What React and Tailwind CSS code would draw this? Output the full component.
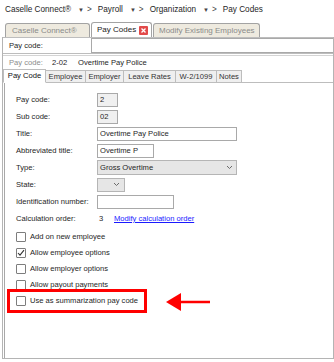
import React from 'react'

const Chevron = ({ className = '' }) => (
  <svg width="7" height="5" viewBox="0 0 7 5" className={className}>
    <path d="M1 1 L3.5 3.5 L6 1" fill="none" stroke="#6b6b6b" strokeWidth="1" />
  </svg>
)

const Crumb = ({ text, caret = true }) => (
  <>
    <span>{text}</span>
    {caret && (
      <>
        <span className="ml-[7px] text-[6px] text-[#444]">▼</span>
        <span className="ml-[3px] mr-[6px] text-[#444]">&gt;</span>
      </>
    )}
  </>
)

const Field = ({ label, children }) => (
  <div className="flex h-[17px] items-center">
    <div className="w-[81px] shrink-0">{label}</div>
    {children}
  </div>
)

const Check = ({ label, checked = false }) => (
  <div className="flex h-[16px] items-center">
    <div className="flex h-[10px] w-[10px] items-center justify-center rounded-[1px] border border-[#7d7d7d] bg-white">
      {checked && (
        <svg width="8" height="8" viewBox="0 0 8 8">
          <path d="M1 4 L3 6.2 L7 1.2" fill="none" stroke="#333" strokeWidth="1.1" />
        </svg>
      )}
    </div>
    <span className="ml-[4px]">{label}</span>
  </div>
)

const innerTabs = [
  ['Pay Code', 'w-[43px]', true],
  ['Employee', 'w-[40px]'],
  ['Employer', 'w-[38px]'],
  ['Leave Rates', 'w-[52px]'],
  ['W-2/1099', 'w-[41px]'],
  ['Notes', 'w-[25px]'],
]

export default function App() {
  return (
    <div className="relative h-[362px] w-[334px] overflow-hidden bg-white font-['Liberation_Sans',Arial,sans-serif] text-[7.6px] text-[#1e1e1e]">
      {/* breadcrumb */}
      <div className="flex h-[21px] items-center pl-[5px] text-[8.2px]">
        <Crumb text="Caselle Connect®" />
        <Crumb text="Payroll" />
        <Crumb text="Organization" />
        <Crumb text="Pay Codes" caret={false} />
      </div>

      {/* window tabs */}
      <div className="flex h-[16px] items-end pl-[5px] text-[8px]">
        <div className="flex h-[14px] w-[85px] items-center rounded-t-[3px] border border-b-0 border-[#a3a3a3] bg-[#eeeadf] pl-[6px] text-[#8a8a8a]">
          Caselle Connect®
        </div>
        <div className="ml-[1px] flex h-[15px] w-[61px] items-center rounded-t-[3px] border border-b-0 border-[#a3a3a3] bg-white pl-[5px] text-[#222]">
          <span>Pay Codes</span>
          <span className="ml-auto mr-[3px] flex h-[9px] w-[9px] items-center justify-center rounded-[1px] bg-[#e24a4a]">
            <svg width="7" height="7" viewBox="0 0 7 7">
              <path d="M1.5 1.5 L5.5 5.5 M5.5 1.5 L1.5 5.5" stroke="#fff" strokeWidth="1.3" />
            </svg>
          </span>
        </div>
        <div className="ml-[1px] flex h-[14px] w-[107px] items-center rounded-t-[3px] border border-b-0 border-[#a3a3a3] bg-[#eeeadf] pl-[5px] text-[#8a8a8a]">
          Modify Existing Employees
        </div>
      </div>

      {/* main panel */}
      <div className="ml-[2px] flex h-[322px] w-[332px] flex-col border border-t-0 border-[#b4b4b4]">
        <div className="flex h-[17px] items-center border-t border-b border-[#bdbdbd] pl-[6px]">
          <div className="w-[82px] shrink-0">Pay code:</div>
          <div className="h-[15px] flex-1 border border-r-0 border-[#a9a9a9] bg-white" />
        </div>

        <div className="mt-[1px] flex h-[14px] items-center border-t border-[#d4d4d4] pl-[6px]">
          <span className="w-[43px] text-[#8c8c8c]">Pay code:</span>
          <span className="w-[26px]">2-02</span>
          <span>Overtime Pay Police</span>
        </div>

        {/* inner tabs */}
        <div className="flex h-[14px] items-end border-b border-[#bdbdbd]">
          {innerTabs.map(([t, w, active]) => (
            <div
              key={t}
              className={`${w} -mb-[1px] flex items-center justify-center border border-[#bdbdbd] ${
                active ? 'h-[14px] border-b-white bg-white text-[#111]' : 'h-[13px] border-l-0 bg-[#efefef] text-[#333]'
              }`}
            >
              {t}
            </div>
          ))}
        </div>

        {/* content */}
        <div className="ml-[1px] flex-1 border-l border-[#a8a8a8] pl-[11px] pt-[8px]">
          <Field label="Pay code:">
            <div className="flex h-[14px] w-[21px] items-center border border-[#a9a9a9] bg-[#f0f0f0] pl-[2px]">2</div>
          </Field>
          <Field label="Sub code:">
            <div className="flex h-[14px] w-[21px] items-center border border-[#a9a9a9] bg-[#f0f0f0] pl-[2px]">02</div>
          </Field>
          <Field label="Title:">
            <div className="flex h-[14px] w-[140px] items-center border border-[#a9a9a9] bg-white pl-[2px]">Overtime Pay Police</div>
          </Field>
          <Field label="Abbreviated title:">
            <div className="flex h-[14px] w-[57px] items-center border border-[#a9a9a9] bg-white pl-[2px]">Overtime P</div>
          </Field>
          <Field label="Type:">
            <div className="flex h-[15px] w-[140px] items-center border border-[#b5b5b5] bg-[#e6e6e6] pl-[2px] pr-[3px]">
              <span>Gross Overtime</span>
              <Chevron className="ml-auto" />
            </div>
          </Field>
          <Field label="State:">
            <div className="flex h-[14px] w-[28px] items-center justify-end border border-[#b5b5b5] bg-[#e6e6e6] pr-[4px]">
              <Chevron />
            </div>
          </Field>
          <Field label="Identification number:">
            <div className="h-[14px] w-[77px] border border-[#a9a9a9] bg-white" />
          </Field>
          <Field label="Calculation order:">
            <span className="ml-[2px] w-[15px]">3</span>
            <span className="text-[#1a1aff] underline">Modify calculation order</span>
          </Field>

          <div className="mt-[2px]">
            <Check label="Add on new employee" />
            <Check label="Allow employee options" checked />
            <Check label="Allow employer options" />
            <Check label="Allow payout payments" />
            <Check label="Use as summarization pay code" />
          </div>
        </div>
      </div>

      {/* annotation */}
      <div className="absolute left-[7px] top-[289px] h-[24px] w-[140px] border-[3px] border-[#ff0000]" />
      <svg className="absolute left-[165px] top-[292px]" width="48" height="20" viewBox="0 0 48 20">
        <polygon points="1,10 16,1 16,19" fill="#ff0000" />
        <line x1="14" y1="10" x2="45" y2="10" stroke="#ff0000" strokeWidth="2.5" />
      </svg>
    </div>
  )
}
